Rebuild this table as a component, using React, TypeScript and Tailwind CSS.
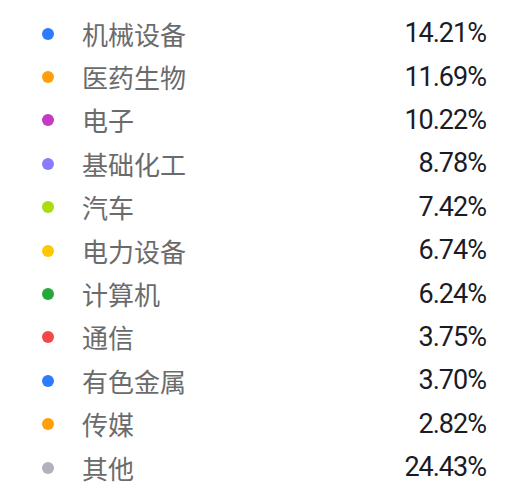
const items = [
  { name: "机械设备", value: "14.21%", color: "bg-[#2f7bff]" },
  { name: "医药生物", value: "11.69%", color: "bg-[#ff9f0a]" },
  { name: "电子", value: "10.22%", color: "bg-[#c43ac4]" },
  { name: "基础化工", value: "8.78%", color: "bg-[#8a7bff]" },
  { name: "汽车", value: "7.42%", color: "bg-[#a8dc0a]" },
  { name: "电力设备", value: "6.74%", color: "bg-[#ffc800]" },
  { name: "计算机", value: "6.24%", color: "bg-[#26a83c]" },
  { name: "通信", value: "3.75%", color: "bg-[#f24848]" },
  { name: "有色金属", value: "3.70%", color: "bg-[#2f7bff]" },
  { name: "传媒", value: "2.82%", color: "bg-[#ff9f0a]" },
  { name: "其他", value: "24.43%", color: "bg-[#b0b2bc]" },
];

export default function App() {
  return (
    <div className="w-[507px] h-[488px] bg-white pt-[12px] overflow-hidden">
      {items.map((item) => (
        <div key={item.name} className="flex items-center h-[43.4px] pl-[42px] pr-[21px]">
          <span className={`w-[12px] h-[12px] rounded-full shrink-0 ${item.color}`} />
          <span className="ml-[28px] text-[26px] leading-none text-[#6b6b6b] font-['Noto_Sans_CJK_SC',sans-serif]">
            {item.name}
          </span>
          <span className="ml-auto text-[27px] leading-none tracking-[-1px] text-[#1b1b26] font-['Roboto','Noto_Sans',sans-serif]">
            {item.value}
          </span>
        </div>
      ))}
    </div>
  );
}
